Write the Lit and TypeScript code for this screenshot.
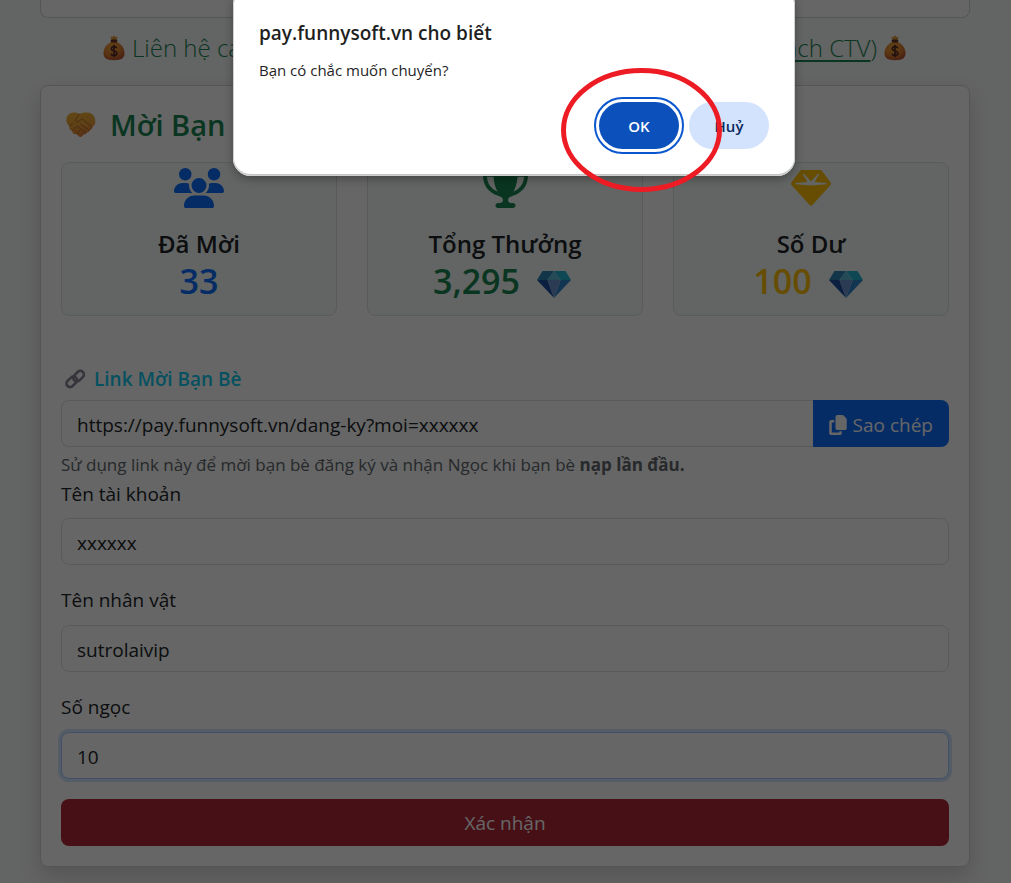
import { LitElement, html, css } from "lit";
import { customElement, property } from "lit/decorators.js";

const usersIcon = html`<svg class="fa" viewBox="0 0 640 512" aria-hidden="true"><path d="M144 0a80 80 0 1 1 0 160A80 80 0 1 1 144 0zM512 0a80 80 0 1 1 0 160A80 80 0 1 1 512 0zM0 298.7C0 239.8 47.8 192 106.7 192l42.7 0c15.9 0 31 3.5 44.6 9.7c-1.3 7.2-1.9 14.7-1.9 22.3c0 38.2 16.8 72.5 43.3 96c-.2 0-.4 0-.7 0L21.3 320C9.6 320 0 310.4 0 298.7zM405.3 320c-.2 0-.4 0-.7 0c26.6-23.5 43.3-57.8 43.3-96c0-7.6-.7-15-1.9-22.3c13.6-6.3 28.7-9.7 44.6-9.7l42.7 0C592.2 192 640 239.8 640 298.7c0 11.8-9.6 21.3-21.3 21.3l-213.3 0zM224 224a96 96 0 1 1 192 0 96 96 0 1 1 -192 0zM128 485.3C128 411.7 187.7 352 261.3 352l117.3 0C452.3 352 512 411.7 512 485.3c0 14.7-11.9 26.7-26.7 26.7l-330.7 0c-14.7 0-26.7-11.9-26.7-26.7z"/></svg>`;

const trophyIcon = html`<svg class="fa" viewBox="0 0 576 512" aria-hidden="true"><path d="M400 0L176 0c-26.5 0-48.1 21.8-47.1 48.2c.2 5.3 .4 10.6 .7 15.8L24 64C10.7 64 0 74.7 0 88c0 92.6 33.5 157 78.5 200.7c44.3 43.1 98.3 64.8 138.1 75.8c23.4 6.5 39.4 26 39.4 45.6c0 20.9-17 37.9-37.9 37.9L192 448c-17.7 0-32 14.3-32 32s14.3 32 32 32l192 0c17.7 0 32-14.3 32-32s-14.3-32-32-32l-26.1 0C337 448 320 431 320 410.1c0-19.6 15.9-39.2 39.4-45.6c39.9-11 93.9-32.7 138.2-75.8C542.5 245 576 180.6 576 88c0-13.3-10.7-24-24-24L446.4 64c.3-5.2 .5-10.4 .7-15.8C448.1 21.8 426.5 0 400 0zM48.9 112l84.4 0c9.1 90.1 29.2 150.3 51.9 190.6c-24.9-11-50.8-26.5-73.2-48.3c-32-31.1-58-76-63-142.3zM464.1 254.3c-22.4 21.8-48.3 37.3-73.2 48.3c22.7-40.3 42.8-100.5 51.9-190.6l84.4 0c-5.1 66.3-31.1 111.2-63 142.3z"/></svg>`;

const gemIcon = html`<svg class="fa" viewBox="0 0 512 512" aria-hidden="true"><path d="M116.7 33.8c4.5-6.1 11.7-9.8 19.3-9.8l240 0c7.6 0 14.8 3.6 19.3 9.8l112 152c6.8 9.2 6.1 21.9-1.5 30.4l-232 256c-4.5 5-11 7.9-17.8 7.9s-13.2-2.9-17.8-7.9l-232-256c-7.7-8.5-8.3-21.2-1.5-30.4l112-152z"/><path class="shine" d="M155.200 73.600c-3.300 2.500-4.200 7-2.100 10.500l57.400 95.600L63.300 192c-4.100 .3-7.300 3.800-7.300 8s3.200 7.600 7.300 8l192 16c.4 0 .9 0 1.300 0l192-16c4.100-.3 7.300-3.800 7.300-8s-3.200-7.600-7.300-8L301.500 179.800l57.400-95.600c2.100-3.500 1.200-8.100-2.100-10.500s-7.900-2-10.700 1L256 172.200 165.900 74.600c-2.800-3-7.400-3.400-10.700-1z"/></svg>`;

const copyIcon = html`<svg class="copy-icon" viewBox="0 0 448 512" aria-hidden="true"><path d="M208 0L332.100 0c12.700 0 24.900 5.100 33.900 14.100l67.900 67.900c9 9 14.100 21.200 14.100 33.900L448 336c0 26.500-21.500 48-48 48l-192 0c-26.500 0-48-21.500-48-48l0-288c0-26.500 21.500-48 48-48zM48 128l80 0 0 64-64 0 0 256 192 0 0-32 64 0 0 48c0 26.500-21.500 48-48 48L48 512c-26.500 0-48-21.500-48-48L0 176c0-26.500 21.500-48 48-48z"/></svg>`;

const diamond = html`<svg class="diamond" viewBox="0 0 34 27" aria-hidden="true">
  <path d="M5.500 0h11.500l-6.500 9H0z" fill="#2d84b6"/>
  <path d="M17 0h11.500L34 9H23.500z" fill="#22b4d2"/>
  <path d="M17 0l6.500 9h-13z" fill="#5cbcd6"/>
  <path d="M0 9h10.500L17 27z" fill="#1c4fa3"/>
  <path d="M34 9H23.500L17 27z" fill="#2f86cb"/>
  <path d="M10.500 9h13L17 27z" fill="#6d93cf"/>
</svg>`;

const moneyBag = html`<svg class="bag" viewBox="0 0 22 26" aria-hidden="true">
  <defs>
    <radialGradient id="bagFill" cx=".4" cy=".3" r=".8"><stop offset="0" stop-color="#f3a83a"/><stop offset=".55" stop-color="#dd8030"/><stop offset="1" stop-color="#b0452f"/></radialGradient>
  </defs>
  <path d="M7.500 1.500l2 .8L11 .2l1.500 2 2.200-.7-1.200 3.800h-5z" fill="#e29a35"/>
  <path d="M8.400 7C3.500 9 .5 13.500 .5 18.300c0 4.700 3 6.900 10.500 6.900s10.500-2.200 10.500-6.900C21.500 13.500 18.500 9 13.600 7z" fill="url(#bagFill)"/>
  <rect x="7.800" y="4.500" width="6.400" height="3" rx="1" fill="#6a3428"/>
  <path d="M13.700 13.200c-.6-1.100-1.500-1.500-2.700-1.500-1.600 0-2.700.8-2.700 2.100 0 3 5.600 1.500 5.600 4.500 0 1.400-1.200 2.200-2.900 2.200-1.400 0-2.500-.6-3-1.700M11 10v12.300" fill="none" stroke="#572c2a" stroke-width="1.700"/>
</svg>`;

const handshake = html`<svg class="shake" viewBox="0 0 30 26" aria-hidden="true">
  <defs>
    <linearGradient id="handFill" x1="0" y1="0" x2=".3" y2="1"><stop offset="0" stop-color="#f0b52f"/><stop offset=".6" stop-color="#eda13a"/><stop offset="1" stop-color="#d97d35"/></linearGradient>
  </defs>
  <path d="M4 1.500C6.500.2 10 .3 14 2c4-1.700 8-1.800 11-.6 3 1.600 5 5.600 4.200 9.600-.4 2-2 3.200-3.200 4.200.4 1.700-.8 3-2.400 2.900-.1 1.700-1.400 2.700-3 2.400-.4 1.600-1.800 2.400-3.300 1.900-.7 2-2.700 3.200-4.400 2.200L10.500 22C8 22.500 6 21 6.200 18.700 3.800 18.500 2.700 16.300 3.400 14.200 1.200 12.500 0 9.500.4 6.500.7 4.300 2.200 2.400 4 1.500z" fill="url(#handFill)"/>
  <path d="M14 2C10.500 5.500 9 7.500 10 9c1.500 1.500 4-.4 6-2.200L26 15.200M14.500 12.200l8.500 6M11.500 14.500l8.200 6M3.400 14.200l3.300-3M6.200 18.700l4-4.200M10.500 22l3.500-3.800" fill="none" stroke="#bb6a2b" stroke-width="1" stroke-linecap="round"/>
</svg>`;

const chain = html`<svg class="chain" viewBox="0 0 20 20" aria-hidden="true">
  <g fill="none" stroke="#8c8296" stroke-width="2.600">
    <rect x="7.600" y="3.600" width="12" height="7.200" rx="3.600" transform="rotate(-45 13.600 7.200)"/>
    <rect x=".8" y="9.200" width="12" height="7.200" rx="3.600" transform="rotate(-45 6.800 12.800)"/>
  </g>
</svg>`;

const icons = { users: usersIcon, trophy: trophyIcon, gem: gemIcon };

@customElement("stat-card")
class StatCard extends LitElement {
  @property() icon: keyof typeof icons = "users";
  @property() label = "";
  @property() value = "";
  @property() tone = "primary";
  @property({ type: Boolean }) gems = false;

  static styles = css`
    :host {
      display: block;
      flex: 1 1 0;
      border: 1px solid #dde3e1;
      border-radius: 8px;
      background: #f5fcf9;
      text-align: center;
      padding: 5px 16px 13px;
      color: #212529;
    }
    .fa { display: block; height: 40px; margin: 0 auto 20px; fill: currentColor; }
    .shine { fill: #f5fcf9; }
    .primary { color: #0d6efd; }
    .success { color: #198754; }
    .warning { color: #ffc107; }
    .label { margin: 0; font-size: 24px; line-height: 32px; font-weight: 600; }
    .value {
      display: flex;
      justify-content: center;
      align-items: center;
      gap: 17px;
      font-size: 34px;
      line-height: 42px;
      font-weight: 600;
      margin: 0;
    }
    .diamond { width: 34px; height: 27px; margin: 6px 6px 0 0; }
  `;

  render() {
    return html`
      <div class=${this.tone}>${icons[this.icon]}</div>
      <h5 class="label">${this.label}</h5>
      <p class="value ${this.tone}"><span>${this.value}</span>${this.gems ? diamond : ""}</p>
    `;
  }
}

@customElement("app-root")
class AppRoot extends LitElement {
  static styles = css`
    :host {
      display: block;
      position: relative;
      min-height: 100vh;
      overflow: hidden;
      background: #f8f9fa;
      color: #212529;
      font-family: "Open Sans", "Noto Sans", sans-serif;
      font-size: 19px;
      line-height: 30px;
    }
    * { box-sizing: border-box; }
    .page { padding: 0 41px 16px 40px; }
    .panel { background: #fff; border: 1px solid #d4d5d6; border-radius: 8px; }
    .previous { height: 18px; border-top: 0; border-radius: 0 0 8px 8px; }
    .contact {
      display: flex;
      justify-content: space-between;
      padding: 12px 64px 20px 63px;
      font-size: 24px;
      line-height: 35px;
      font-weight: 300;
      color: #198754;
    }
    .contact-part { display: flex; align-items: center; gap: 7px; }
    .contact a { color: inherit; text-underline-offset: 3px; text-decoration-thickness: 2px; }
    .bag { width: 22px; height: 26px; }
    .invite { padding: 20px; box-shadow: 0 10px 20px rgba(0, 0, 0, .15); }
    h4 {
      display: flex;
      align-items: center;
      gap: 14px;
      margin: 0 0 18px;
      padding-left: 5px;
      font-size: 29px;
      line-height: 38px;
      font-weight: 600;
      color: #198754;
    }
    .shake { width: 30px; height: 26px; }
    .stats { display: flex; gap: 30px; margin-bottom: 48px; }
    .link-label {
      display: flex;
      align-items: center;
      gap: 9px;
      padding-left: 4px;
      margin-bottom: 6px;
      color: #0dcaf0;
      font-weight: 600;
    }
    .chain { width: 20px; height: 20px; }
    .group { display: flex; }
    input {
      display: block;
      width: 100%;
      min-width: 0;
      height: 47px;
      padding: 2px 15px 0;
      border: 1px solid #dee2e6;
      border-radius: 8px;
      background: #fff;
      color: #212529;
      font: inherit;
      outline: none;
    }
    .group input { border-radius: 8px 0 0 8px; border-right: 0; }
    .current { border-color: #a3c7fe; box-shadow: 0 0 0 3px rgba(13, 110, 253, .18); }
    .page button {
      height: 47px;
      border: 0;
      color: #fff;
      font: inherit;
    }
    .copy {
      flex: none;
      display: flex;
      align-items: center;
      gap: 6px;
      padding: 2px 16px 0;
      border-radius: 0 8px 8px 0;
      background: #0d6efd;
    }
    .copy-icon { width: 18px; height: 20px; fill: #fff; }
    .hint { margin: 4px 0 0; font-size: 17px; color: #61676c; line-height: 28px; }
    label { display: block; }
    .field { margin-bottom: 20px; }
    .field label { margin-bottom: 10px; }
    .hint + .field label { margin-bottom: 9px; }
    .submit { display: block; width: 100%; border-radius: 8px; background: #b02a37; }
    .veil { position: absolute; inset: 0; background: rgba(0, 0, 0, .6); }
    dialog {
      position: absolute;
      top: -13px;
      left: 17px;
      right: 0;
      width: 562px;
      margin: 0 auto;
      padding: 31px 26px 27px;
      border: 0;
      border-radius: 18px;
      background: #fff;
      color: #1f1f1f;
      box-shadow: inset 0 0 0 1px #d0d0d0, inset 0 -2px 0 #c4c4c4, 0 3px 10px rgba(0, 0, 0, .3);
    }
    h2 { margin: 0; font-size: 19px; line-height: 30px; font-weight: 600; }
    .question { margin: 9px 0 18px; font-size: 15px; line-height: 27px; }
    .actions { display: flex; justify-content: flex-end; gap: 10px; }
    .actions button {
      width: 80px;
      height: 47px;
      border: 0;
      border-radius: 24px;
      font: 600 15px "Open Sans", "Noto Sans", sans-serif;
    }
    .ok { background: #0b50bb; color: #fff; outline: 2px solid #0b57d0; outline-offset: 3px; }
    .cancel { background: #d3e3fd; color: #0a2a5e; }
    .marker {
      position: absolute;
      top: 80px;
      right: 72px;
      width: 163px;
      height: 126px;
      pointer-events: none;
    }
  `;

  private field(id: string, label: string, value: string, current = false) {
    return html`
      <div class="field">
        <label for=${id}>${label}</label>
        <input id=${id} class=${current ? "current" : ""} .value=${value} />
      </div>
    `;
  }

  render() {
    return html`
      <main class="page">
        <div class="panel previous"></div>
        <div class="contact">
          <span class="contact-part">${moneyBag}Liên hệ các</span>
          <span class="contact-part"><span><a href="#ctv">sách CTV</a>)</span>${moneyBag}</span>
        </div>
        <section class="panel invite">
          <h4>${handshake}Mời Bạn Bè</h4>
          <div class="stats">
            <stat-card icon="users" label="Đã Mời" value="33" tone="primary"></stat-card>
            <stat-card icon="trophy" label="Tổng Thưởng" value="3,295" tone="success" gems></stat-card>
            <stat-card icon="gem" label="Số Dư" value="100" tone="warning" gems></stat-card>
          </div>
          <label class="link-label" for="link">${chain}Link Mời Bạn Bè</label>
          <div class="group">
            <input id="link" readonly .value=${"https://pay.funnysoft.vn/dang-ky?moi=xxxxxx"} />
            <button class="copy" type="button">${copyIcon}Sao chép</button>
          </div>
          <p class="hint">Sử dụng link này để mời bạn bè đăng ký và nhận Ngọc khi bạn bè <strong>nạp lần đầu.</strong></p>
          ${this.field("account", "Tên tài khoản", "xxxxxx")}
          ${this.field("character", "Tên nhân vật", "sutrolaivip")}
          ${this.field("amount", "Số ngọc", "10", true)}
          <button class="submit" type="button">Xác nhận</button>
        </section>
      </main>
      <div class="veil"></div>
      <dialog open aria-labelledby="ask">
        <h2 id="ask">pay.funnysoft.vn cho biết</h2>
        <p class="question">Bạn có chắc muốn chuyển?</p>
        <div class="actions">
          <button class="ok" type="button">OK</button>
          <button class="cancel" type="button">Huỷ</button>
        </div>
        <svg class="marker" viewBox="0 0 163 126" aria-hidden="true">
          <ellipse cx="81.500" cy="63" rx="78" ry="59.500" fill="none" stroke="#ed1c24" stroke-width="5"/>
        </svg>
      </dialog>
    `;
  }
}
